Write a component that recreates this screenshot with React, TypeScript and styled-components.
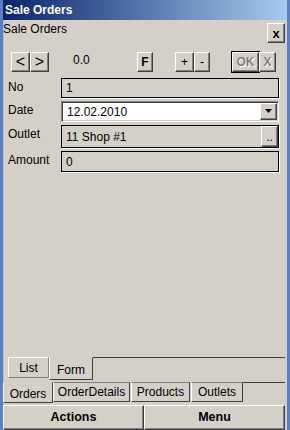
import React from "react";
import styled, { createGlobalStyle, css } from "styled-components";

const FACE = "#d4d0c8";

const Global = createGlobalStyle`
  html, body { margin: 0; padding: 0; background: ${FACE}; }
  body { font-family: "Liberation Sans", Arial, sans-serif; font-size: 12px; color: #000; }
  * { box-sizing: border-box; }
`;

const raised = css`
  border-top: 1px solid #fff;
  border-left: 1px solid #fff;
  border-right: 1px solid #404040;
  border-bottom: 1px solid #404040;
  box-shadow: inset -1px -1px 0 #808080;
  background: ${FACE};
`;

const Window = styled.div`
  width: 290px;
  height: 430px;
  display: flex;
  flex-direction: column;
  background: ${FACE};
  border-left: 3px solid #5b7fc0;
  border-right: 3px solid #5b7fc0;
  box-shadow: inset 1px 0 0 #a8c0e8;
`;

const TitleBar = styled.div`
  height: 20px;
  flex: none;
  background: linear-gradient(to right, #0a246a, #a6caf0);
  color: #fff;
  font-weight: bold;
  font-size: 12px;
  line-height: 20px;
  padding-left: 2px;
`;

const Header = styled.div`
  display: flex;
  justify-content: space-between;
  align-items: flex-start;
  height: 32px;
  flex: none;
`;

const Caption = styled.div`
  padding-top: 2px;
  line-height: 14px;
`;

const Btn = styled.div<{ $w: number; $h?: number; $ml?: number; $bold?: boolean; $size?: number; $disabled?: boolean; $default?: boolean }>`
  ${raised};
  width: ${(p) => p.$w}px;
  height: ${(p) => p.$h ?? 20}px;
  margin-left: ${(p) => p.$ml ?? 0}px;
  flex: none;
  display: flex;
  align-items: center;
  justify-content: center;
  font-weight: ${(p) => (p.$bold ? "bold" : "normal")};
  font-size: ${(p) => p.$size ?? 12}px;
  line-height: 1;
  ${(p) =>
    p.$disabled &&
    css`
      color: #808080;
      text-shadow: 1px 1px 0 #fff;
    `}
  ${(p) =>
    p.$default &&
    css`
      outline: 1px solid #000;
      outline-offset: 0;
      border-color: #fff #404040 #404040 #fff;
    `}
`;

const CloseBtn = styled(Btn)`
  margin-top: 3px;
  margin-right: 2px;
`;

const Toolbar = styled.div`
  display: flex;
  align-items: center;
  height: 20px;
  flex: none;
`;

const Value = styled.div<{ $ml: number; $w: number }>`
  margin-left: ${(p) => p.$ml}px;
  width: ${(p) => p.$w}px;
  flex: none;
  font-size: 12px;
  line-height: 14px;
  padding-bottom: 4px;
`;

const Form = styled.div`
  display: flex;
  flex-direction: column;
  gap: 3px;
  margin-top: 6px;
  padding: 0 8px 0 5px;
  flex: none;
`;

const Row = styled.div<{ $h: number }>`
  display: grid;
  grid-template-columns: 53px 1fr;
  height: ${(p) => p.$h}px;
`;

const Label = styled.div`
  padding-top: 2px;
  line-height: 14px;
`;

const Field = styled.div<{ $white?: boolean }>`
  display: flex;
  align-items: stretch;
  border: 1px solid #000;
  box-shadow: 1px 1px 0 #fff;
  background: ${FACE};
  ${(p) =>
    p.$white &&
    css`
      background: #fff;
      border-color: #808080 #fff #fff #808080;
      box-shadow: inset 1px 1px 0 #404040, inset -1px -1px 0 ${FACE};
      padding: 1px;
    `}
`;

const FieldText = styled.div`
  flex: 1;
  padding-left: 4px;
  display: flex;
  align-items: center;
  font-size: 12px;
`;

const SideBtn = styled.div`
  ${raised};
  width: 17px;
  flex: none;
  display: flex;
  align-items: center;
  justify-content: center;
`;

const Spacer = styled.div`
  flex: 1;
`;

const TabStrip = styled.div<{ $h: number }>`
  display: flex;
  align-items: flex-start;
  height: ${(p) => p.$h}px;
  flex: none;
  padding-right: 2px;
`;

const Tab = styled.div<{ $w: number; $ml?: number; $active?: boolean; $h: number }>`
  width: ${(p) => p.$w}px;
  height: ${(p) => p.$h}px;
  margin-left: ${(p) => p.$ml ?? 0}px;
  flex: none;
  display: flex;
  align-items: center;
  justify-content: center;
  font-size: 12px;
  border-top: 1px solid #808080;
  border-left: 1px solid #fff;
  border-right: 1px solid #404040;
  border-bottom: 1px solid #404040;
  ${(p) =>
    p.$active &&
    css`
      border-top: 1px solid transparent;
      border-left: 1px solid #fff;
      height: ${p.$h + 2}px;
      padding-top: 3px;
    `}
`;

const ListTab = styled(Tab)`
  border-top: 1px solid #fff;
  border-right: 1px solid #808080;
  border-bottom: 1px solid #808080;
`;

const StripFill = styled.div`
  flex: 1;
  border-top: 1px solid #404040;
`;

const Buttons = styled.div`
  display: flex;
  height: 25px;
  flex: none;
  padding-right: 2px;
`;

const BigBtn = styled.div`
  ${raised};
  flex: 1;
  display: flex;
  align-items: center;
  justify-content: center;
  font-weight: bold;
  font-size: 12.5px;
  padding-bottom: 1px;
`;

function Caret() {
  return (
    <svg width="8" height="5" viewBox="0 0 8 5">
      <path d="M0 0H7L3.5 4Z" fill="#000" />
    </svg>
  );
}

export default function App() {
  return (
    <>
      <Global />
      <Window>
        <TitleBar>Sale Orders</TitleBar>
        <Header>
          <Caption>Sale Orders</Caption>
          <CloseBtn $w={18} $bold $size={13}>
            x
          </CloseBtn>
        </Header>
        <Toolbar>
          <Btn $w={19} $ml={8} $size={16}>
            &lt;
          </Btn>
          <Btn $w={19} $size={16}>
            &gt;
          </Btn>
          <Value $ml={24} $w={64}>
            0.0
          </Value>
          <Btn $w={16} $bold>
            F
          </Btn>
          <Btn $w={19} $ml={22}>
            +
          </Btn>
          <Btn $w={16}>-</Btn>
          <Btn $w={27} $ml={22} $disabled $default $bold>
            OK
          </Btn>
          <Btn $w={17} $disabled $bold>
            X
          </Btn>
        </Toolbar>
        <Form>
          <Row $h={20}>
            <Label>No</Label>
            <Field>
              <FieldText>1</FieldText>
            </Field>
          </Row>
          <Row $h={21}>
            <Label>Date</Label>
            <Field $white>
              <FieldText>12.02.2010</FieldText>
              <SideBtn>
                <Caret />
              </SideBtn>
            </Field>
          </Row>
          <Row $h={23}>
            <Label>Outlet</Label>
            <Field>
              <FieldText>11 Shop #1</FieldText>
              <SideBtn>..</SideBtn>
            </Field>
          </Row>
          <Row $h={21}>
            <Label>Amount</Label>
            <Field>
              <FieldText>0</FieldText>
            </Field>
          </Row>
        </Form>
        <Spacer />
        <TabStrip $h={25}>
          <ListTab $w={41} $ml={5} $h={21}>
            List
          </ListTab>
          <Tab $w={44} $active $h={21}>
            Form
          </Tab>
          <StripFill />
        </TabStrip>
        <TabStrip $h={23}>
          <Tab $w={50} $active $h={19}>
            Orders
          </Tab>
          <Tab $w={77} $h={20}>
            OrderDetails
          </Tab>
          <Tab $w={59} $ml={1} $h={20}>
            Products
          </Tab>
          <Tab $w={52} $ml={1} $h={20}>
            Outlets
          </Tab>
          <StripFill />
        </TabStrip>
        <Buttons>
          <BigBtn>Actions</BigBtn>
          <BigBtn>Menu</BigBtn>
        </Buttons>
      </Window>
    </>
  );
}
